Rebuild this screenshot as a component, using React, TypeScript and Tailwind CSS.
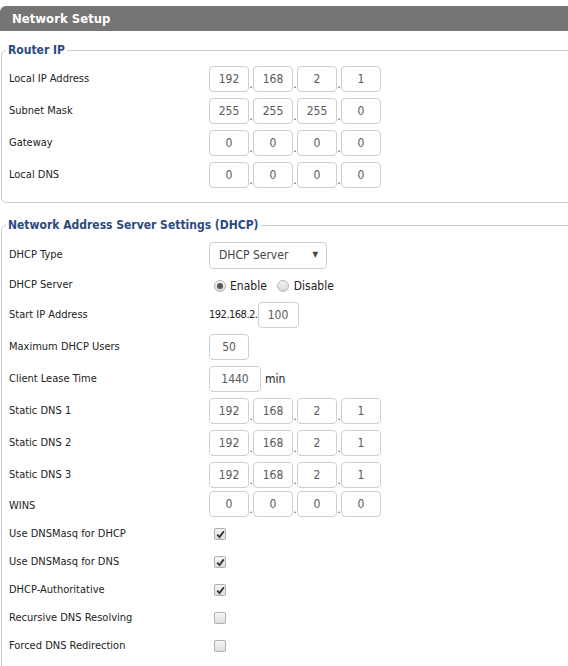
import * as React from 'react';

const IpBox: React.FC<{ value: string; width?: string }> = ({ value, width = 'w-[40px]' }) => (
  <div className={`${width} h-[26px] border border-[#cfcfcf] rounded-[4px] bg-white flex items-center justify-center text-[12px] text-[#5a5a5a]`}>
    {value}
  </div>
);

const IpGroup: React.FC<{ parts: string[] }> = ({ parts }) => (
  <div className="flex items-end">
    {parts.map((p, i) => (
      <React.Fragment key={i}>
        {i > 0 && <span className="w-[4px] text-center text-[11px] leading-[12px] text-[#333] mb-[1px]">.</span>}
        <IpBox value={p} />
      </React.Fragment>
    ))}
  </div>
);

const Row: React.FC<{ label: string; h?: string; children: React.ReactNode }> = ({ label, h = 'h-[32px]', children }) => (
  <div className={`flex items-center ${h}`}>
    <div className="w-[200px] text-[11px] text-[#222] pt-[1px]">{label}</div>
    <div className="flex items-center">{children}</div>
  </div>
);

const Radio: React.FC<{ checked?: boolean }> = ({ checked }) => (
  <span className="w-[12px] h-[12px] rounded-full border border-[#b5b5b5] bg-gradient-to-b from-[#f4f4f4] to-[#d8d8d8] flex items-center justify-center">
    {checked && <span className="w-[6px] h-[6px] rounded-full bg-[#555]" />}
  </span>
);

const Check: React.FC<{ checked?: boolean }> = ({ checked }) => (
  <span className="ml-[5px] w-[12px] h-[12px] rounded-[2px] border border-[#b0b0b0] bg-gradient-to-b from-[#f6f6f6] to-[#dedede] flex items-center justify-center">
    {checked && (
      <svg width="9" height="9" viewBox="0 0 9 9">
        <path d="M1.2 4.6 L3.5 7 L7.8 1.4" fill="none" stroke="#333" strokeWidth="1.8" />
      </svg>
    )}
  </span>
);

const Legend: React.FC<{ text: string }> = ({ text }) => (
  <legend className="ml-[-3px] px-[2px] text-[12px] leading-[16px] font-bold text-[#2c4a7f]">{text}</legend>
);

export default function App() {
  const checks: [string, boolean][] = [
    ['Use DNSMasq for DHCP', true],
    ['Use DNSMasq for DNS', true],
    ['DHCP-Authoritative', true],
    ['Recursive DNS Resolving', false],
    ['Forced DNS Redirection', false],
  ];

  return (
    <div className="w-[568px] h-[666px] overflow-hidden bg-white font-['DejaVu_Sans_Condensed','DejaVu_Sans',sans-serif]">
      <div className="mt-[6px] h-[25px] bg-[#767573] rounded-tl-[6px] pl-[12px] flex items-center text-[13px] font-bold text-white">
        Network Setup
      </div>

      {/* Router IP */}
      <fieldset className="mt-[11px] ml-[1px] w-[590px] border border-[#cccccc] rounded-l-[5px] pl-[7px] pt-[5px] pb-[11px]">
        <Legend text="Router IP" />
        <Row label="Local IP Address"><IpGroup parts={['192', '168', '2', '1']} /></Row>
        <Row label="Subnet Mask"><IpGroup parts={['255', '255', '255', '0']} /></Row>
        <Row label="Gateway"><IpGroup parts={['0', '0', '0', '0']} /></Row>
        <Row label="Local DNS"><IpGroup parts={['0', '0', '0', '0']} /></Row>
      </fieldset>

      {/* DHCP */}
      <fieldset className="mt-[14px] ml-[1px] w-[590px] border border-[#cccccc] rounded-l-[5px] pl-[7px] pt-[6px] pb-[20px]">
        <Legend text="Network Address Server Settings (DHCP)" />
        <Row label="DHCP Type">
          <div className="w-[118px] h-[27px] border border-[#cfcfcf] rounded-[4px] flex items-center justify-between pl-[9px] pr-[8px] text-[12px] text-[#444]">
            <span>DHCP Server</span>
            <span className="text-[8px] text-[#444]">▼</span>
          </div>
        </Row>
        <Row label="DHCP Server" h="h-[28px]">
          <div className="flex items-center text-[12px] text-[#222] pl-[5px] pt-[2px]">
            <Radio checked />
            <span className="ml-[4px] mr-[10px]">Enable</span>
            <Radio />
            <span className="ml-[5px]">Disable</span>
          </div>
        </Row>
        <Row label="Start IP Address">
          <span className="text-[11px] text-[#222] whitespace-nowrap tracking-[-0.5px]">192.168.2.</span>
          <IpBox value="100" width="w-[41px]" />
        </Row>
        <Row label="Maximum DHCP Users"><IpBox value="50" /></Row>
        <Row label="Client Lease Time">
          <IpBox value="1440" width="w-[52px]" />
          <span className="ml-[4px] text-[12px] text-[#222]">min</span>
        </Row>
        <Row label="Static DNS 1"><IpGroup parts={['192', '168', '2', '1']} /></Row>
        <Row label="Static DNS 2"><IpGroup parts={['192', '168', '2', '1']} /></Row>
        <Row label="Static DNS 3"><IpGroup parts={['192', '168', '2', '1']} /></Row>
        <Row label="WINS" h="h-[29px]">
          <div className="pb-[3px]"><IpGroup parts={['0', '0', '0', '0']} /></div>
        </Row>
        {checks.map(([label, on]) => (
          <Row key={label} label={label} h="h-[28px]">
            <Check checked={on} />
          </Row>
        ))}
      </fieldset>
    </div>
  );
}
